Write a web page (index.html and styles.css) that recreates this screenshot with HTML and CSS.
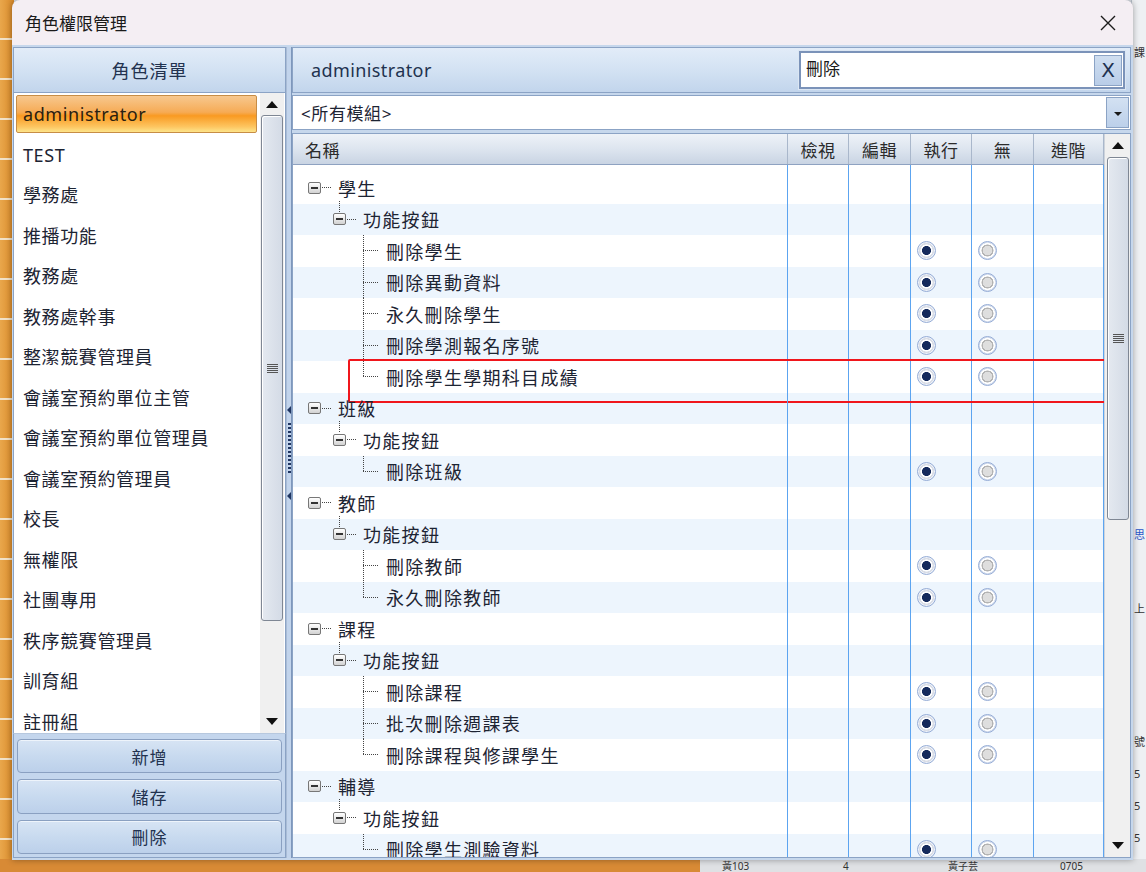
FILE: index.html
```html
<!DOCTYPE html>
<html lang="zh-Hant">
<head>
<meta charset="utf-8">
<title>角色權限管理</title>
<link rel="stylesheet" href="styles.css">
</head>
<body>
<div class="desk">
  <div class="app-left"></div>
  <div class="app-right">
    <span class="frag f1">課</span>
    <span class="frag f2 link">思</span>
    <span class="frag f3">上</span>
    <span class="frag f4">號</span>
    <span class="frag f5">5</span>
    <span class="frag f6">5</span>
    <span class="frag f7">5</span>
  </div>
  <div class="app-bottom">
    <span class="b1">黃103</span><span class="b2">4</span><span class="b3">黃子芸</span><span class="b4">0705</span>
  </div>

  <div class="dialog">
    <div class="titlebar">
      <span class="title">角色權限管理</span>
      <span class="close">
        <svg width="16" height="16" viewBox="0 0 16 16"><path d="M1 1L15 15M15 1L1 15" stroke="#1b1b1b" stroke-width="1.4"/></svg>
      </span>
    </div>
    <div class="dbody">
      <div class="left">
        <div class="phead center">角色清單</div>
        <div class="listwrap">
          <ul class="list">
            <li class="sel">administrator</li>
            <li>TEST</li>
            <li>學務處</li>
            <li>推播功能</li>
            <li>教務處</li>
            <li>教務處幹事</li>
            <li>整潔競賽管理員</li>
            <li>會議室預約單位主管</li>
            <li>會議室預約單位管理員</li>
            <li>會議室預約管理員</li>
            <li>校長</li>
            <li>無權限</li>
            <li>社團專用</li>
            <li>秩序競賽管理員</li>
            <li>訓育組</li>
            <li>註冊組</li>
          </ul>
          <div class="vscroll small">
            <span class="arr up"></span>
            <div class="thumb t-left"><span class="grip"></span></div>
            <span class="arr down"></span>
          </div>
        </div>
        <div class="btns">
          <button class="btn">新增</button>
          <button class="btn">儲存</button>
          <button class="btn">刪除</button>
        </div>
      </div>

      <div class="splitter">
        <span class="sarr a1"></span>
        <span class="sdots"></span>
        <span class="sarr a2"></span>
      </div>

      <div class="right">
        <div class="phead rhead">
          <span class="rname">administrator</span>
          <div class="search">
            <span class="stext">刪除</span>
            <span class="sclear">X</span>
          </div>
        </div>
        <div class="combo">
          <span class="ctext">&lt;所有模組&gt;</span>
          <span class="cbtn"><span class="tri"></span></span>
        </div>
        <div class="grid">
          <div class="gmain">
            <div class="ghead">
              <div class="hc name">名稱</div>
              <div class="hc">檢視</div>
              <div class="hc">編輯</div>
              <div class="hc">執行</div>
              <div class="hc">無</div>
              <div class="hc">進階</div>
            </div>
            <div class="gbody">
              <div class="row first l0"><div class="c name"><span class="exp"></span><span class="dh"></span><span class="txt">學生</span></div><div class="c"></div><div class="c"></div><div class="c"></div><div class="c"></div><div class="c"></div></div>
              <div class="row alt l1"><div class="c name"><span class="exp"></span><span class="dh"></span><span class="txt">功能按鈕</span></div><div class="c"></div><div class="c"></div><div class="c"></div><div class="c"></div><div class="c"></div></div>
              <div class="row l2"><div class="c name"><span class="dh long"></span><span class="txt">刪除學生</span></div><div class="c"></div><div class="c"></div><div class="c rc"><span class="radio on"></span></div><div class="c rc"><span class="radio off"></span></div><div class="c"></div></div>
              <div class="row alt l2"><div class="c name"><span class="dh long"></span><span class="txt">刪除異動資料</span></div><div class="c"></div><div class="c"></div><div class="c rc"><span class="radio on"></span></div><div class="c rc"><span class="radio off"></span></div><div class="c"></div></div>
              <div class="row l2"><div class="c name"><span class="dh long"></span><span class="txt">永久刪除學生</span></div><div class="c"></div><div class="c"></div><div class="c rc"><span class="radio on"></span></div><div class="c rc"><span class="radio off"></span></div><div class="c"></div></div>
              <div class="row alt l2"><div class="c name"><span class="dh long"></span><span class="txt">刪除學測報名序號</span></div><div class="c"></div><div class="c"></div><div class="c rc"><span class="radio on"></span></div><div class="c rc"><span class="radio off"></span></div><div class="c"></div></div>
              <div class="row l2 last hl"><div class="c name"><span class="dh long"></span><span class="txt">刪除學生學期科目成績</span></div><div class="c"></div><div class="c"></div><div class="c rc"><span class="radio on"></span></div><div class="c rc"><span class="radio off"></span></div><div class="c"></div></div>
              <div class="row alt l0"><div class="c name"><span class="exp"></span><span class="dh"></span><span class="txt">班級</span></div><div class="c"></div><div class="c"></div><div class="c"></div><div class="c"></div><div class="c"></div></div>
              <div class="row l1"><div class="c name"><span class="exp"></span><span class="dh"></span><span class="txt">功能按鈕</span></div><div class="c"></div><div class="c"></div><div class="c"></div><div class="c"></div><div class="c"></div></div>
              <div class="row alt l2 last"><div class="c name"><span class="dh long"></span><span class="txt">刪除班級</span></div><div class="c"></div><div class="c"></div><div class="c rc"><span class="radio on"></span></div><div class="c rc"><span class="radio off"></span></div><div class="c"></div></div>
              <div class="row l0"><div class="c name"><span class="exp"></span><span class="dh"></span><span class="txt">教師</span></div><div class="c"></div><div class="c"></div><div class="c"></div><div class="c"></div><div class="c"></div></div>
              <div class="row alt l1"><div class="c name"><span class="exp"></span><span class="dh"></span><span class="txt">功能按鈕</span></div><div class="c"></div><div class="c"></div><div class="c"></div><div class="c"></div><div class="c"></div></div>
              <div class="row l2"><div class="c name"><span class="dh long"></span><span class="txt">刪除教師</span></div><div class="c"></div><div class="c"></div><div class="c rc"><span class="radio on"></span></div><div class="c rc"><span class="radio off"></span></div><div class="c"></div></div>
              <div class="row alt l2 last"><div class="c name"><span class="dh long"></span><span class="txt">永久刪除教師</span></div><div class="c"></div><div class="c"></div><div class="c rc"><span class="radio on"></span></div><div class="c rc"><span class="radio off"></span></div><div class="c"></div></div>
              <div class="row l0"><div class="c name"><span class="exp"></span><span class="dh"></span><span class="txt">課程</span></div><div class="c"></div><div class="c"></div><div class="c"></div><div class="c"></div><div class="c"></div></div>
              <div class="row alt l1"><div class="c name"><span class="exp"></span><span class="dh"></span><span class="txt">功能按鈕</span></div><div class="c"></div><div class="c"></div><div class="c"></div><div class="c"></div><div class="c"></div></div>
              <div class="row l2"><div class="c name"><span class="dh long"></span><span class="txt">刪除課程</span></div><div class="c"></div><div class="c"></div><div class="c rc"><span class="radio on"></span></div><div class="c rc"><span class="radio off"></span></div><div class="c"></div></div>
              <div class="row alt l2"><div class="c name"><span class="dh long"></span><span class="txt">批次刪除週課表</span></div><div class="c"></div><div class="c"></div><div class="c rc"><span class="radio on"></span></div><div class="c rc"><span class="radio off"></span></div><div class="c"></div></div>
              <div class="row l2 last"><div class="c name"><span class="dh long"></span><span class="txt">刪除課程與修課學生</span></div><div class="c"></div><div class="c"></div><div class="c rc"><span class="radio on"></span></div><div class="c rc"><span class="radio off"></span></div><div class="c"></div></div>
              <div class="row alt l0"><div class="c name"><span class="exp"></span><span class="dh"></span><span class="txt">輔導</span></div><div class="c"></div><div class="c"></div><div class="c"></div><div class="c"></div><div class="c"></div></div>
              <div class="row l1"><div class="c name"><span class="exp"></span><span class="dh"></span><span class="txt">功能按鈕</span></div><div class="c"></div><div class="c"></div><div class="c"></div><div class="c"></div><div class="c"></div></div>
              <div class="row alt l2 last"><div class="c name"><span class="dh long"></span><span class="txt">刪除學生測驗資料</span></div><div class="c"></div><div class="c"></div><div class="c rc"><span class="radio on"></span></div><div class="c rc"><span class="radio off"></span></div><div class="c"></div></div>
              <div class="row"><div class="c name"></div><div class="c"></div><div class="c"></div><div class="c"></div><div class="c"></div><div class="c"></div></div>
            </div>
          </div>
          <div class="vscroll big">
            <span class="arr up"></span>
            <div class="thumb t-right"><span class="grip"></span></div>
            <span class="arr down"></span>
          </div>
        </div>
      </div>
    </div>
  </div>
</div>
</body>
</html>
```

FILE: styles.css
```css
* { box-sizing: border-box; }
html, body { margin: 0; padding: 0; }
body {
  width: 1146px;
  height: 872px;
  overflow: hidden;
  font-family: "Noto Sans", "Noto Sans CJK TC", sans-serif;
  color: #1d2433;
  background: #d8dde4;
}
.desk { position: relative; width: 1146px; height: 872px; }

/* background application */
.app-left {
  position: absolute; left: 0; top: 0; width: 14px; height: 872px;
  background:
    repeating-linear-gradient(180deg, transparent 0 38px, #f2e2c8 38px 40px),
    linear-gradient(90deg, #e9a74c, #d98a2a);
}
.app-right {
  position: absolute; left: 1131px; top: 0; width: 15px; height: 872px;
  background: #eef0f3;
  border-left: 1px solid #b9c2cc;
  overflow: hidden;
}
.frag { position: absolute; left: 2px; font-size: 11px; color: #333; }
.frag.link { color: #2a57c9; }
.f1 { top: 44px; } .f2 { top: 526px; } .f3 { top: 600px; } .f4 { top: 733px; }
.f5 { top: 766px; } .f6 { top: 798px; } .f7 { top: 830px; }
.app-bottom {
  position: absolute; left: 0; top: 859px; width: 1146px; height: 13px;
  background: linear-gradient(90deg, #d88a35 0 700px, #dfe1e4 700px);
  font-size: 10px; line-height: 12px; color: #333; overflow: hidden;
}
.app-bottom span { position: absolute; top: 1px; }
.b1 { left: 722px; } .b2 { left: 843px; } .b3 { left: 948px; } .b4 { left: 1060px; }

/* dialog window */
.dialog {
  position: absolute; left: 12px; top: 0; width: 1121px; height: 860px;
  background: #f4eef3;
  border-radius: 8px 8px 0 0;
  box-shadow: 0 0 6px rgba(0,0,0,.35);
  display: flex; flex-direction: column;
  overflow: hidden;
}
.titlebar {
  height: 45px; flex: none;
  display: flex; align-items: center; justify-content: space-between;
  padding: 0 15px 0 13px;
}
.title { font-size: 17px; color: #1a1a1a; }
.close { width: 20px; height: 20px; display: flex; align-items: center; justify-content: center; }

.dbody {
  flex: 1; min-height: 0; display: flex;
  background: #c6d7ec;
  padding: 2px 0 2px 1px;
}

.phead {
  height: 46px; flex: none;
  background: linear-gradient(180deg, #e2ecf8 0%, #d3e2f3 50%, #c2d5ec 100%);
  border: 1px solid #8ba3c5;
  font-size: 18px; color: #22324f;
  display: flex; align-items: center;
}
.phead.center { justify-content: center; letter-spacing: 1px; }

/* left panel */
.left { width: 273px; flex: none; display: flex; flex-direction: column; min-height: 0; }
.listwrap {
  flex: 1; min-height: 0; display: flex; background: #fff;
  border-left: 1px solid #8ba3c5; border-right: 1px solid #8ba3c5;
  overflow: hidden;
}
.list { list-style: none; margin: 0; padding: 1px 0 0 2px; flex: 1; min-height: 0; overflow: hidden; }
.list li {
  height: 40.5px; line-height: 40px;
  padding-left: 7px; font-size: 18px; letter-spacing: 0.6px;
  white-space: nowrap;
}
.list li.sel {
  height: 38px; line-height: 36px; margin: 1px 3px 1.5px 0;
  padding-left: 6px;
  border: 1px solid #c78d46; border-radius: 2px;
  background: linear-gradient(180deg, #f7c88f 0%, #f6ab55 45%, #f99a22 55%, #fdc560 85%, #fde48a 100%);
  color: #2a2010;
}

.vscroll { flex: none; background: #f0f0f0; display: flex; flex-direction: column; align-items: center; position: relative; min-height: 0; }
.vscroll.small { width: 24px; margin-right: 1px; }
.vscroll.big { width: 27px; border-left: 1px solid #cdd3db; }
.arr { width: 0; height: 0; border-left: 6px solid transparent; border-right: 6px solid transparent; flex: none; }
.arr.up { border-bottom: 7px solid #111; margin-top: 8px; }
.arr.down { border-top: 7px solid #111; margin-top: auto; margin-bottom: 8px; }
.thumb {
  width: 22px; margin-top: 7px; flex: none;
  border: 1px solid #7f8794; border-radius: 3px;
  background: linear-gradient(90deg, #e4e9f0, #d4dbe6);
  display: flex; align-items: center; justify-content: center;
  box-shadow: inset 1px 1px 0 #fff;
}
.t-left { height: 506px; }
.t-right { height: 363px; width: 22px; margin-top: 8px; }
.grip {
  width: 11px; height: 9px;
  background: repeating-linear-gradient(180deg, #555 0 1px, transparent 1px 2px);
}

.btns {
  flex: none; height: 125px;
  display: flex; flex-direction: column; gap: 6px;
  padding: 5px 3px 3px 3px;
  border: 1px solid #8ba3c5; border-top: 1px solid #b7c8de;
  background: #c4d6ed;
}
.btn {
  height: 35px; font-family: inherit; font-size: 17px; color: #22324f;
  letter-spacing: 1px;
  border: 1px solid #8aa0c1; border-radius: 4px;
  background: linear-gradient(180deg, #d7e4f4 0%, #c8daef 50%, #bcd0ea 100%);
  box-shadow: inset 0 1px 0 #eef4fb;
}

/* splitter */
.splitter {
  width: 6px; flex: none; position: relative;
  background: #c2d4ec;
  border-left: 1px solid #a9bcd6;
  border-right: 1px solid #7e97bb;
}
.sarr { position: absolute; left: 0; width: 0; height: 0; border-top: 4px solid transparent; border-bottom: 4px solid transparent; border-right: 4px solid #1f3561; }
.a1 { top: 359px; } .a2 { top: 445px; }
.sdots {
  position: absolute; left: 1px; top: 376px; width: 3px; height: 52px;
  background: repeating-linear-gradient(180deg, #1f3561 0 2px, transparent 2px 4px);
}

/* right panel */
.right { width: 839px; flex: none; display: flex; flex-direction: column; min-height: 0; }
.rhead { padding-left: 18px; justify-content: space-between; padding-right: 5px; }
.rname { font-size: 18px; letter-spacing: 0.4px; }
.search {
  width: 326px; height: 38px;
  border: 2px solid #7b93b9; background: #fff;
  display: flex; align-items: center; justify-content: space-between;
  padding: 0 1px 0 5px;
  box-shadow: 0 0 0 1px #dbe6f3;
}
.stext { font-size: 17px; color: #1a1a1a; margin-top: -6px; }
.sclear {
  width: 28px; height: 31px;
  background: linear-gradient(180deg, #cfdef0, #b9cde8);
  border: 1px solid #8ba3c5;
  font-size: 20px; color: #20304f; font-family: "DejaVu Sans", sans-serif;
  display: flex; align-items: center; justify-content: center;
}
.combo {
  height: 35px; flex: none; margin-top: 2px;
  background: #fff; border: 1px solid #8ba3c5;
  display: flex; align-items: center; justify-content: space-between;
  padding: 0 1px 0 8px;
}
.ctext { font-size: 17px; letter-spacing: 0.6px; }
.cbtn {
  width: 23px; height: 31px;
  background: linear-gradient(180deg, #d3e1f2, #bcd0ea);
  border: 1px solid #8ba3c5;
  display: flex; align-items: center; justify-content: center;
}
.tri { width: 0; height: 0; border-left: 4px solid transparent; border-right: 4px solid transparent; border-top: 4px solid #1a1a1a; margin-top: 3px; }

.grid {
  flex: 1; min-height: 0; display: flex; margin-top: 3px;
  background: #fff; border: 1px solid #8ba3c5;
  overflow: hidden;
}
.gmain { width: 811px; flex: none; display: flex; flex-direction: column; overflow: hidden; }
.ghead {
  height: 31px; flex: none;
  display: grid; grid-template-columns: 495px 61px 62px 61px 62px 70px;
  background: linear-gradient(180deg, #eef2f8 0%, #dde5ef 50%, #c9d4e3 100%);
  border-bottom: 1px solid #8ea2c1;
}
.hc {
  font-size: 17px; color: #2b2b2b; letter-spacing: 0.5px;
  display: flex; align-items: center; justify-content: center;
  border-right: 1px solid #a9b7cb;
}
.hc.name { justify-content: flex-start; padding-left: 12px; }

.gbody { flex: 1; min-height: 0; overflow: hidden; }
.row {
  display: grid; grid-template-columns: 495px 61px 62px 61px 62px 70px;
  height: 31.5px;
}
.row.first { height: 38.5px; }
.row.first .c { padding-top: 7px; }
.row.alt { background: #edf5fd; }
.c {
  border-right: 1px solid #5ca4f0;
  display: flex; align-items: center; justify-content: center;
}
.c.rc { justify-content: flex-start; padding-left: 6px; }
.c.name {
  justify-content: flex-start; position: relative;
  font-size: 18px; letter-spacing: 1.3px; color: #1d2433;
}
.row:last-child .c { height: 200px; }

.l0 .c.name { padding-left: 15px; }
.l1 .c.name { padding-left: 40px; }
.l2 .c.name { padding-left: 70px; }

.exp {
  width: 13px; height: 12px; flex: none; position: relative;
  border: 1px solid #777; border-radius: 2px;
  background: linear-gradient(180deg, #ffffff, #d2d2d2);
}
.exp::before {
  content: ""; position: absolute; left: 2px; top: 4px; width: 7px; height: 2px; background: #333;
}
.dh {
  width: 9px; height: 1px; flex: none; margin: 0 7px 0 1px;
  background: repeating-linear-gradient(90deg, #444 0 1px, transparent 1px 2px);
}
.dh.long { width: 15px; margin: 0 8px 0 0; }

/* vertical connector from parent to level-1 box */
.l1 .c.name::before {
  content: ""; position: absolute; left: 46px; top: -3px; height: 11px; width: 1px;
  background: repeating-linear-gradient(180deg, #444 0 1px, transparent 1px 2px);
}
/* vertical line for level-2 children */
.l2 .c.name::before {
  content: ""; position: absolute; left: 70px; top: 0; bottom: 0; width: 1px;
  background: repeating-linear-gradient(180deg, #444 0 1px, transparent 1px 2px);
}
.l2.last .c.name::before { bottom: 50%; }

.radio {
  width: 19px; height: 19px; border-radius: 50%; flex: none;
  border: 1px solid #95acd6;
}
.radio.on {
  background: radial-gradient(circle, #152a5c 0 4.2px, #ffffff 4.8px 5.8px, #d9dde6 6.3px 7.4px, #eef2f9 7.8px);
}
.radio.off {
  background: radial-gradient(circle, #dedede 0 4.6px, #b3b3b3 5px 5.8px, #ffffff 6.2px 7.2px, #d9e1ef 7.6px);
}

.row.hl { position: relative; }
.row.hl::after {
  content: ""; position: absolute; left: 55px; top: -2px; width: 757px; height: 40px;
  border: 2px solid #f0161c; border-radius: 2px; pointer-events: none;
}
```
